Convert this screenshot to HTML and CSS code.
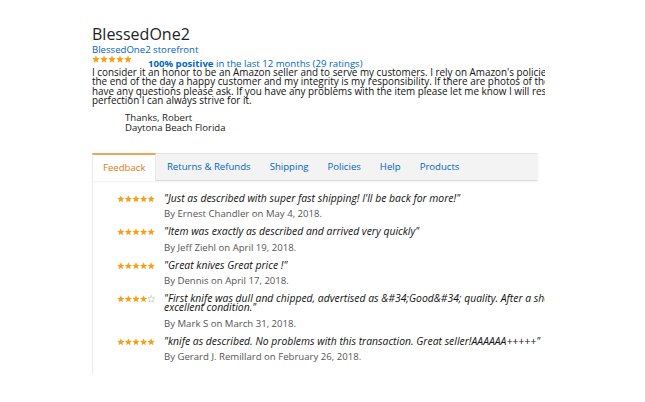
FILE: index.html
```html
<!DOCTYPE html>
<html>
<head>
<meta charset="utf-8">
<link rel="stylesheet" href="styles.css">
</head>
<body>
<svg class="defs" width="0" height="0" aria-hidden="true">
  <symbol id="star" viewBox="0 0 10 10">
    <polygon points="5,0.4 6.3,3.6 9.8,3.8 7.1,6.1 8,9.6 5,7.7 2,9.6 2.9,6.1 0.2,3.8 3.7,3.6"/>
  </symbol>
</svg>
<div class="seller">
  <h1 class="name">BlessedOne2</h1>
  <a class="storefront" href="#">BlessedOne2 storefront</a>
  <div class="rating">
    <svg class="stars" viewBox="0 0 50 10"><use class="on" href="#star" x="0" width="10" height="10"/><use class="on" href="#star" x="10" width="10" height="10"/><use class="on" href="#star" x="20" width="10" height="10"/><use class="on" href="#star" x="30" width="10" height="10"/><use class="on" href="#star" x="40" width="10" height="10"/></svg>
    <span class="rating-text"><b>100% positive</b> in the last 12 months (29 ratings)</span>
  </div>
  <p class="about">I consider it an honor to be an Amazon seller and to serve my customers. I rely on Amazon's policies and guidelines to help me. At<br>the end of the day a happy customer and my integrity is my responsibility. If there are photos of the item they are the actual item. If you<br>have any questions please ask. If you have any problems with the item please let me know I will resolve them. I am not perfect but<br>perfection I can always strive for it.</p>
  <p class="sign">Thanks, Robert<br>Daytona Beach Florida</p>

  <div class="tabs">
    <a class="tab active" href="#">Feedback</a>
    <a class="tab" href="#">Returns &amp; Refunds</a>
    <a class="tab" href="#">Shipping</a>
    <a class="tab" href="#">Policies</a>
    <a class="tab" href="#">Help</a>
    <a class="tab" href="#">Products</a>
  </div>

  <div class="panel">
    <div class="review">
      <svg class="stars small" viewBox="0 0 50 10"><use class="on" href="#star" x="0" width="10" height="10"/><use class="on" href="#star" x="10" width="10" height="10"/><use class="on" href="#star" x="20" width="10" height="10"/><use class="on" href="#star" x="30" width="10" height="10"/><use class="on" href="#star" x="40" width="10" height="10"/></svg>
      <div class="review-body">
        <div class="quote">"Just as described with super fast shipping! I'll be back for more!"</div>
        <div class="by">By Ernest Chandler on May 4, 2018.</div>
      </div>
    </div>
    <div class="review">
      <svg class="stars small" viewBox="0 0 50 10"><use class="on" href="#star" x="0" width="10" height="10"/><use class="on" href="#star" x="10" width="10" height="10"/><use class="on" href="#star" x="20" width="10" height="10"/><use class="on" href="#star" x="30" width="10" height="10"/><use class="on" href="#star" x="40" width="10" height="10"/></svg>
      <div class="review-body">
        <div class="quote">"Item was exactly as described and arrived very quickly"</div>
        <div class="by">By Jeff Ziehl on April 19, 2018.</div>
      </div>
    </div>
    <div class="review">
      <svg class="stars small" viewBox="0 0 50 10"><use class="on" href="#star" x="0" width="10" height="10"/><use class="on" href="#star" x="10" width="10" height="10"/><use class="on" href="#star" x="20" width="10" height="10"/><use class="on" href="#star" x="30" width="10" height="10"/><use class="on" href="#star" x="40" width="10" height="10"/></svg>
      <div class="review-body">
        <div class="quote">"Great knives Great price !"</div>
        <div class="by">By Dennis on April 17, 2018.</div>
      </div>
    </div>
    <div class="review">
      <svg class="stars small" viewBox="0 0 50 10"><use class="on" href="#star" x="0" width="10" height="10"/><use class="on" href="#star" x="10" width="10" height="10"/><use class="on" href="#star" x="20" width="10" height="10"/><use class="on" href="#star" x="30" width="10" height="10"/><use class="off" href="#star" x="40" width="10" height="10"/></svg>
      <div class="review-body">
        <div class="quote">"First knife was dull and chipped, advertised as &amp;#34;Good&amp;#34; quality. After a short exchange the seller replaced it with one in<br>excellent condition."</div>
        <div class="by">By Mark S on March 31, 2018.</div>
      </div>
    </div>
    <div class="review">
      <svg class="stars small" viewBox="0 0 50 10"><use class="on" href="#star" x="0" width="10" height="10"/><use class="on" href="#star" x="10" width="10" height="10"/><use class="on" href="#star" x="20" width="10" height="10"/><use class="on" href="#star" x="30" width="10" height="10"/><use class="on" href="#star" x="40" width="10" height="10"/></svg>
      <div class="review-body">
        <div class="quote">"knife as described. No problems with this transaction. Great seller!AAAAAA+++++"</div>
        <div class="by">By Gerard J. Remillard on February 26, 2018.</div>
      </div>
    </div>
  </div>
</div>
</body>
</html>
```

FILE: styles.css
```css
html, body {
  margin: 0;
  padding: 0;
  background: #fff;
}
body {
  font-family: "Open Sans", "Noto Sans", sans-serif;
  color: #111;
}
.defs {
  position: absolute;
  width: 0;
  height: 0;
  overflow: hidden;
}
.seller {
  width: 453px;
  margin-left: 92px;
  padding-top: 24px;
  overflow: hidden;
}
.name {
  margin: 0;
  font-size: 16px;
  font-weight: 400;
  line-height: 20px;
  color: #222;
}
.storefront {
  display: block;
  margin-top: 0;
  font-size: 9.6px;
  line-height: 11px;
  color: #0066c0;
  text-decoration: none;
}
.rating {
  display: flex;
  align-items: flex-start;
  font-size: 9.6px;
  line-height: 11px;
  color: #0066c0;
  white-space: nowrap;
}
.stars {
  flex: none;
  display: block;
  width: 40px;
  height: 8px;
  margin-top: 0;
}
.stars .on {
  fill: #f6a01a;
}
.stars .off {
  fill: #fff;
  stroke: #b8b8b8;
  stroke-width: 0.8;
}
.rating-text {
  margin-left: 16px;
  margin-top: 3px;
}
.rating-text b {
  font-weight: 700;
}
.about {
  margin: -1px 0 0;
  font-size: 9.9px;
  line-height: 9.4px;
  white-space: nowrap;
  color: #111;
}
.sign {
  margin: 7px 0 0 33px;
  font-size: 9.6px;
  line-height: 10px;
  color: #222;
}
.tabs {
  display: flex;
  margin-top: 20px;
  width: 445px;
  height: 26px;
  background: #f3f3f3;
  border-top: 1px solid #e3e3e3;
  border-bottom: 1px solid #dcdcdc;
  box-shadow: 1px 1px 2px rgba(0,0,0,0.06);
}
.tab {
  display: flex;
  align-items: center;
  padding: 0 9.5px;
  font-size: 9.6px;
  color: #0066c0;
  text-decoration: none;
  white-space: nowrap;
}
.tab.active {
  background: #fff;
  color: #e47911;
  border-top: 2px solid #e9a55a;
  margin-top: -1px;
  margin-bottom: -1px;
  padding: 0 10px 0 10px;
  border-left: 1px solid #e8e8e8;
  border-right: 1px solid #e8e8e8;
  margin-right: 1px;
}
.panel {
  border-left: 1px solid #ececec;
  padding: 13px 0 12px 24px;
  display: flex;
  flex-direction: column;
  gap: 8px;
}
.review {
  display: flex;
  align-items: flex-start;
}
.stars.small {
  width: 38px;
  height: 7.6px;
  margin-top: 1px;
}
.review-body {
  margin-left: 9px;
  white-space: nowrap;
}
.quote {
  font-style: italic;
  font-size: 10.4px;
  line-height: 9px;
  color: #111;
}
.by {
  margin-top: 5.5px;
  font-size: 9.6px;
  line-height: 11px;
  color: #555;
}
```
